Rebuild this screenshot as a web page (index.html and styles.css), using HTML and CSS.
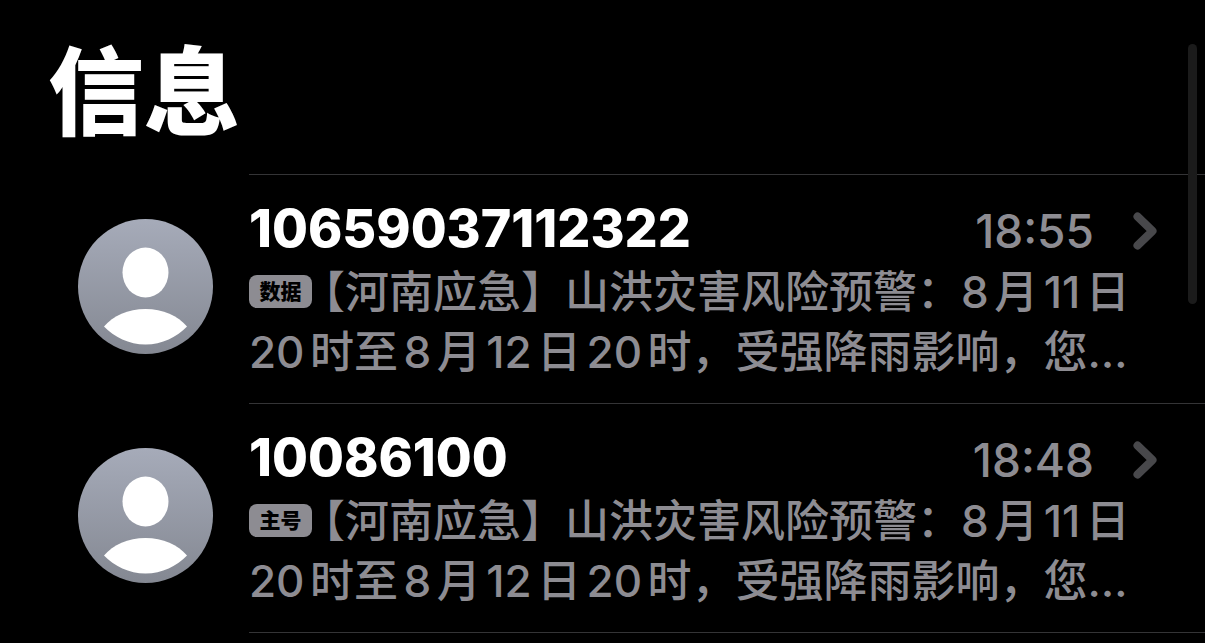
FILE: index.html
```html
<!DOCTYPE html>
<html lang="zh-CN">
<head>
<meta charset="UTF-8">
<meta name="viewport" content="width=device-width, initial-scale=1.0">
<title>信息</title>
<link rel="stylesheet" href="styles.css">
</head>
<body>
<h1>信息</h1>
<div class="scrollbar"></div>
<ul class="messages">
<li>
<a class="message" href="#m1">
<svg class="avatar" viewBox="0 0 135 135" aria-hidden="true">
<defs>
<linearGradient id="avatarFill" x1="0" y1="0" x2="0" y2="1">
<stop offset="0" stop-color="#a6abb9"/>
<stop offset="1" stop-color="#848892"/>
</linearGradient>
</defs>
<circle cx="67.5" cy="67.5" r="67.5" fill="url(#avatarFill)"/>
<ellipse cx="67.5" cy="53.5" rx="23" ry="25" fill="#fff"/>
<path d="M26 107.500C35 97 50 90 67.500 90S100 97 109 107.500C99 118 84 125.500 67.500 125.500S36 118 26 107.500Z" fill="#fff"/>
</svg>
<div class="content">
<div class="top">
<span class="sender">10659037112322</span>
<time class="time">18:55</time>
<svg class="arrow" viewBox="0 0 24 38" aria-hidden="true"><path d="M4.500 4.500L19.500 19L4.500 33.500"/></svg>
</div>
<p class="preview"><span class="tag">数据</span>【河南应急】山洪灾害风险预警：8月11日<br>20时至8月12日20时，受强降雨影响，您…</p>
</div>
</a>
</li>
<li>
<a class="message" href="#m2">
<svg class="avatar" viewBox="0 0 135 135" aria-hidden="true">
<circle cx="67.5" cy="67.5" r="67.5" fill="url(#avatarFill)"/>
<ellipse cx="67.5" cy="53.5" rx="23" ry="25" fill="#fff"/>
<path d="M26 107.500C35 97 50 90 67.500 90S100 97 109 107.500C99 118 84 125.500 67.500 125.500S36 118 26 107.500Z" fill="#fff"/>
</svg>
<div class="content">
<div class="top">
<span class="sender">10086100</span>
<time class="time">18:48</time>
<svg class="arrow" viewBox="0 0 24 38" aria-hidden="true"><path d="M4.500 4.500L19.500 19L4.500 33.500"/></svg>
</div>
<p class="preview"><span class="tag">主号</span>【河南应急】山洪灾害风险预警：8月11日<br>20时至8月12日20时，受强降雨影响，您…</p>
</div>
</a>
</li>
</ul>
</body>
</html>
```
FILE: styles.css
```css
* {
    box-sizing: border-box;
}
body {
    margin: 0;
    background: #000;
    color: #fff;
    font-family: Inter, "Noto Sans CJK SC", sans-serif;
    overflow: hidden;
}
h1 {
    margin: 0;
    padding: 32px 48px 22px;
    font-size: 96px;
    line-height: 120px;
    font-weight: 900;
}
.scrollbar {
    position: absolute;
    top: 44px;
    right: 8px;
    width: 9px;
    height: 260px;
    border-radius: 5px;
    background: #1b1b1b;
}
.messages {
    margin: 0;
    padding: 0;
    list-style: none;
}
.message {
    display: flex;
    gap: 36px;
    padding-left: 78px;
    color: inherit;
    text-decoration: none;
}
.avatar {
    flex: none;
    width: 135px;
    height: 135px;
    margin-top: 45px;
}
.content {
    flex: 1;
    min-width: 0;
    padding: 24px 48px 21px 0;
    border-top: 1px solid #343436;
}
li:last-child .content {
    border-bottom: 1px solid #343436;
}
.top {
    display: flex;
    align-items: center;
    height: 60px;
    margin-bottom: 3px;
    line-height: 60px;
}
.sender {
    flex: 1;
    font-size: 52px;
    font-weight: 800;
}
.time {
    padding-top: 4px;
    color: #8d8c92;
    font-size: 46px;
    font-weight: 500;
}
.arrow {
    width: 24px;
    height: 42px;
    margin-left: 39px;
    padding-top: 4px;
    fill: none;
    stroke: #48484b;
    stroke-width: 8px;
    stroke-linecap: round;
    stroke-linejoin: round;
}
.preview {
    margin: 0;
    color: #8d8c92;
    font-size: 44px;
    line-height: 60px;
    font-weight: 500;
    white-space: nowrap;
    text-autospace: normal;
}
.tag {
    display: inline-block;
    width: 63px;
    height: 33px;
    margin-right: -11px;
    border-radius: 8px;
    background: #8d8c92;
    color: #000;
    font-size: 21px;
    line-height: 33px;
    font-weight: 900;
    text-align: center;
    vertical-align: 9px;
}
```
